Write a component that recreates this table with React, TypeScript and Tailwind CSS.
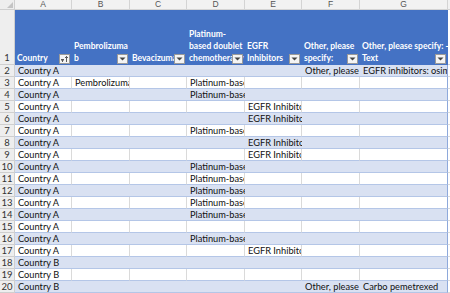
import { Fragment } from "react"

const COLUMNS = ["A", "B", "C", "D", "E", "F", "G"] as const
type Col = (typeof COLUMNS)[number]

const HEADERS: Record<Col, { lines: string[]; sort?: boolean }> = {
  A: { lines: ["Country"], sort: true },
  B: { lines: ["Pembrolizuma", "b"] },
  C: { lines: ["Bevacizumab"] },
  D: { lines: ["Platinum-", "based doublet", "chemotherapy"] },
  E: { lines: ["EGFR", "Inhibitors"] },
  F: { lines: ["Other, please", "specify:"] },
  G: { lines: ["Other, please specify: -", "Text"] },
}

const PLAT = "Platinum-based doublet chemotherapy"
const EGFR = "EGFR Inhibitors"

const ROWS: { n: number; cells: Partial<Record<Col, string>> }[] = [
  { n: 2, cells: { A: "Country A", F: "Other, please specify", G: "EGFR inhibitors: osimertinib" } },
  { n: 3, cells: { A: "Country A", B: "Pembrolizumab", D: PLAT } },
  { n: 4, cells: { A: "Country A", D: PLAT } },
  { n: 5, cells: { A: "Country A", E: EGFR } },
  { n: 6, cells: { A: "Country A", E: EGFR } },
  { n: 7, cells: { A: "Country A", D: PLAT } },
  { n: 8, cells: { A: "Country A", E: EGFR } },
  { n: 9, cells: { A: "Country A", E: EGFR } },
  { n: 10, cells: { A: "Country A", D: PLAT } },
  { n: 11, cells: { A: "Country A", D: PLAT } },
  { n: 12, cells: { A: "Country A", D: PLAT } },
  { n: 13, cells: { A: "Country A", D: PLAT } },
  { n: 14, cells: { A: "Country A", D: PLAT } },
  { n: 15, cells: { A: "Country A" } },
  { n: 16, cells: { A: "Country A", D: PLAT } },
  { n: 17, cells: { A: "Country A", E: EGFR } },
  { n: 18, cells: { A: "Country B" } },
  { n: 19, cells: { A: "Country B" } },
  { n: 20, cells: { A: "Country B", F: "Other, please specify", G: "Carbo pemetrexed" } },
]

function FilterButton({ sort }: { sort?: boolean }) {
  return (
    <div className="absolute bottom-[1px] right-[2px] flex h-[10px] w-[11px] items-center justify-center border border-[#9a9a9a] bg-[#f4f4f4]">
      {sort ? (
        <svg width="9" height="8" viewBox="0 0 9 8">
          <path d="M1 4.5h3M1.5 5.5h2M2 6.5h1" stroke="#333" strokeWidth="0.8" />
          <path d="M6.5 7V1.5M5 3l1.5-1.5L8 3" stroke="#333" strokeWidth="0.8" fill="none" />
        </svg>
      ) : (
        <svg width="7" height="4" viewBox="0 0 7 4">
          <path d="M0.5 0.5h6L3.5 3.5z" fill="#444" />
        </svg>
      )}
    </div>
  )
}

export default function App() {
  return (
    <div className="h-[293px] w-[450px] overflow-hidden bg-white font-['Lato',_'Liberation_Sans',_sans-serif] text-[9.25px]">
      <div className="grid grid-cols-[15px_57px_58px_57px_58px_57px_58px_88px_1fr] grid-rows-[10px_55px_repeat(19,12px)]">
        {/* corner */}
        <div className="relative border-b border-r border-[#cfcfcf] bg-[#eeeeee]">
          <svg className="absolute bottom-[1px] right-[1px]" width="6" height="6" viewBox="0 0 6 6">
            <path d="M6 0V6H0z" fill="#c4c4c4" />
          </svg>
        </div>
        {COLUMNS.map((c) => (
          <div
            key={c}
            className="flex items-center justify-center border-b border-r border-[#d4d4d4] bg-[#f2f2f2] font-['Liberation_Sans',_sans-serif] text-[8.5px] leading-none text-[#555]"
          >
            {c}
          </div>
        ))}
        <div className="border-b border-[#d4d4d4] bg-[#f2f2f2]" />

        {/* table header row */}
        <div className="flex items-end justify-center border-b border-r border-[#cfcfcf] bg-[#eeeeee] pb-[1px] text-[9.5px] leading-[11px] text-[#333]">
          1
        </div>
        {COLUMNS.map((c) => (
          <div key={c} className="relative overflow-hidden bg-[#4472c4]">
            <div className="absolute inset-x-0 bottom-0 pb-[1px] pl-[2px] text-[8.5px] font-bold leading-[12px] whitespace-nowrap text-white">
              {HEADERS[c].lines.map((l) => (
                <div key={l}>{l}</div>
              ))}
            </div>
            <FilterButton sort={HEADERS[c].sort} />
          </div>
        ))}
        <div className="border-b border-[#d4d4d4] bg-white" />

        {ROWS.map((row) => {
          const band = row.n % 2 === 0
          return (
            <Fragment key={row.n}>
              <div className="flex items-center justify-center border-b border-r border-[#cfcfcf] bg-[#eeeeee] text-[9.5px] leading-none text-[#333]">
                {row.n}
              </div>
              {COLUMNS.map((c) => (
                <div
                  key={c}
                  className={
                    "overflow-hidden border-b border-[#b4c6e7] pl-[3px] leading-[11px] whitespace-nowrap text-[#111] " +
                    (band ? "bg-[#d9e1f2] " : "bg-white ") +
                    (c === "G"
                      ? "border-r border-r-[#8ea9db]"
                      : band
                        ? ""
                        : "border-r border-r-[#dadada]")
                  }
                >
                  {row.cells[c] ?? ""}
                </div>
              ))}
              <div className="border-b border-[#dadada] bg-white" />
            </Fragment>
          )
        })}
      </div>
    </div>
  )
}
